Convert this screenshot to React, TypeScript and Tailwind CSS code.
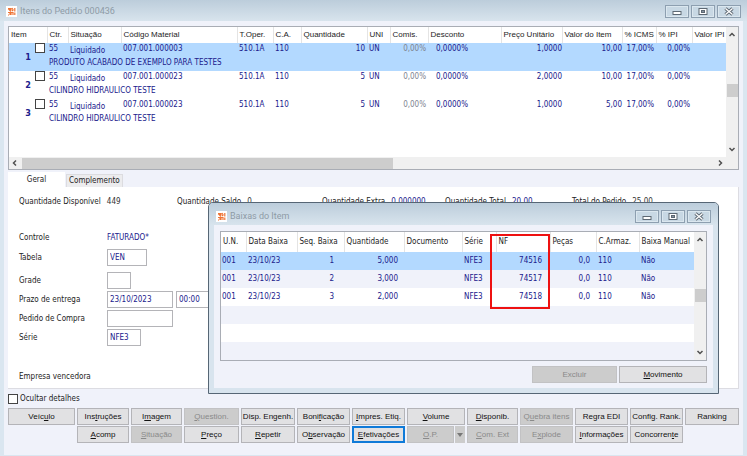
import React from "react";

const ui = "font-['DejaVu_Sans_Condensed','Liberation_Sans',sans-serif]";

function AppIcon() {
  return (
    <svg viewBox="0 0 11 11" className="size-[11px] shrink-0" aria-hidden="true">
      <rect width="11" height="11" fill="#fff" />
      <path d="M2 2.5h3v1.2H3.2L5 5.5M6 2l1 1.500M8.800 2v3.500M6 5l1.500-1.500M2 6.500h2v2.500M5 9V6.500h2V9M8.800 6.500V9M2 9h1" stroke="#ee7436" strokeWidth="1.200" fill="none" />
    </svg>
  );
}

function Caption({ title, frame }: { title: string; frame: string }) {
  const box =
    "flex h-[13px] w-6 items-center justify-center border border-[#8d9fb0] bg-[#c8d8e4] shadow-[inset_0_0_0_1px_#dbe7ef]";
  return (
    <header className={"flex items-start bg-linear-to-b from-[#bccddb] to-[#d8e4ed] " + frame}>
      <div className="flex items-center gap-[3px]">
        <AppIcon />
        <h1 className="font-['Roboto',sans-serif] text-[9px] leading-3 text-[#8e9ba6]">{title}</h1>
      </div>
      <div className="ml-auto flex gap-[2px]">
        <button className={box} aria-label="Minimizar">
          <svg viewBox="0 0 10 9" className="h-[9px] w-[10px]">
            <rect x="1" y="4.500" width="8" height="3" fill="#fff" stroke="#5d6873" />
          </svg>
        </button>
        <button className={box} aria-label="Maximizar">
          <svg viewBox="0 0 10 9" className="h-[9px] w-[10px]">
            <rect x="1" y="1.500" width="8" height="6" fill="#fff" stroke="#5d6873" />
            <rect x="3.500" y="3.500" width="3" height="2" fill="#8793a0" stroke="#5d6873" />
          </svg>
        </button>
        <button className={box} aria-label="Fechar">
          <svg viewBox="0 0 10 9" className="h-[9px] w-[10px]">
            <path d="M1.500 1.500l7 6M8.500 1.500l-7 6" stroke="#5d6873" strokeWidth="3.200" />
            <path d="M1.500 1.500l7 6M8.500 1.500l-7 6" stroke="#fff" strokeWidth="1.300" />
          </svg>
        </button>
      </div>
    </header>
  );
}

function Chevron({ d }: { d: string }) {
  return (
    <svg viewBox="0 0 8 8" className="size-2 shrink-0" aria-hidden="true">
      <path d={d} fill="none" stroke="#505050" strokeWidth="1.500" />
    </svg>
  );
}
const UP = "M1.500 5L4 2.500L6.500 5";
const DOWN = "M1.500 3L4 5.500L6.500 3";
const LEFT = "M5 1.500L2.500 4L5 6.500";
const RIGHT = "M3 1.500L5.500 4L3 6.500";

function VScroll({ thumb }: { thumb: string }) {
  return (
    <div className="flex w-3 shrink-0 flex-col items-center bg-[#f0f0f0] pt-1 pb-1">
      <Chevron d={UP} />
      <div className={"h-[13px] w-[11px] bg-[#cdcdcd] " + thumb} />
      <div className="mt-auto flex">
        <Chevron d={DOWN} />
      </div>
    </div>
  );
}

const items = [
  { n: 1, code: "007.001.000003", name: "PRODUTO ACABADO DE EXEMPLO PARA TESTES", qty: "10", price: "1,0000", total: "10,00" },
  { n: 2, code: "007.001.000023", name: "CILINDRO HIDRAULICO TESTE", qty: "5", price: "2,0000", total: "10,00" },
  { n: 3, code: "007.001.000023", name: "CILINDRO HIDRAULICO TESTE", qty: "5", price: "1,0000", total: "5,00" },
];

const itemCols = [
  ["Item", "w-[38px]"],
  ["Ctr.", "w-[21px]"],
  ["Situação", "w-[53px]"],
  ["Código Material", "w-[116px]"],
  ["T.Oper.", "w-[36px]"],
  ["C.A.", "w-[28px]"],
  ["Quantidade", "w-[66px]"],
  ["UNI", "w-[23px]"],
  ["Comis.", "w-[38px]"],
  ["Desconto", "w-[73px]"],
  ["Preço Unitário", "w-[61px]"],
  ["Valor do Item", "w-[60px]"],
  ["% ICMS", "w-[34px]"],
  ["% IPI", "w-[36px]"],
  ["Valor IPI", "w-[34px]"],
];

function ItemsTable() {
  return (
    <section className="border border-[#a9adb5] bg-white">
      <div className="flex">
        <div className="min-w-0 flex-1 pb-[30px]">
          <table className="w-full table-fixed border-collapse whitespace-nowrap text-[#20208c]">
            <thead>
              <tr className="h-4 text-[#1c1c1c]">
                {itemCols.map(([label, w]) => (
                  <th key={label} className={"border-r border-[#e4e4e4] p-0 pl-[2px] text-left font-['Liberation_Sans',sans-serif] text-[8px] font-normal last:border-r-0 " + w}>
                    {label}
                  </th>
                ))}
              </tr>
            </thead>
            {items.map((it) => (
              <tbody key={it.n} className="first-of-type:bg-[#b3d9ff]">
                <tr className="h-[14px] align-top">
                  <td rowSpan={2} className="p-0">
                    <label className="flex justify-end gap-1 pr-[2px]">
                      <span className="pt-2 text-[9px] leading-3 font-bold">{it.n}</span>
                      <input type="checkbox" className="size-[10px] appearance-none border border-[#444] bg-white" />
                    </label>
                  </td>
                  <td className="p-0 pl-[2px]">55</td>
                  <td className="p-0 pl-[2px] align-bottom">Liquidado</td>
                  <td className="p-0 pl-[2px]">{it.code}</td>
                  <td className="p-0 pl-[2px]">510.1A</td>
                  <td className="p-0 pl-[2px]">110</td>
                  <td className="p-0 pr-[2px] text-right">{it.qty}</td>
                  <td className="p-0 pl-[2px]">UN</td>
                  <td className="p-0 pr-[2px] text-right text-[#7d8390]">0,00%</td>
                  <td className="p-0 pl-2">0,0000%</td>
                  <td className="p-0 text-right">{it.price}</td>
                  <td className="p-0 text-right">{it.total}</td>
                  <td className="p-0 pr-[2px] text-right">17,00%</td>
                  <td className="p-0 pr-[2px] text-right">0,00%</td>
                  <td className="p-0" />
                </tr>
                <tr className="h-[14px] align-top">
                  <td colSpan={14} className="p-0 pl-[2px]">{it.name}</td>
                </tr>
              </tbody>
            ))}
          </table>
        </div>
        <VScroll thumb="mt-[45px]" />
      </div>
      <div className="flex h-3 items-center bg-[#f0f0f0] pr-[14px] pl-[2px]">
        <Chevron d={LEFT} />
        <div className="ml-[3px] h-[11px] w-[52%] bg-[#cdcdcd]" />
        <div className="ml-auto flex">
          <Chevron d={RIGHT} />
        </div>
      </div>
    </section>
  );
}

const field = "h-[17px] border border-[#b4b4b8] bg-white px-[2px] text-[#20208c]";

function Field({ label, children, id }: { label: string; id: string; children: React.ReactNode }) {
  return (
    <div className="flex h-[17px] items-center">
      <label htmlFor={id} className="w-[88px]">{label}</label>
      {children}
    </div>
  );
}

function Details() {
  return (
    <section className="border-r border-b border-[#dcdce2] bg-white pt-[9px] pr-4 pb-[5px] pl-[11px]">
      <dl className="grid h-3 grid-cols-[158fr_145fr_123fr_127fr_150fr] leading-3 whitespace-nowrap">
        {[
          ["Quantidade Disponível", "449", "text-[#333]"],
          ["Quantidade Saldo", "0", "text-[#333]"],
          ["Quantidade Extra", "0,000000", "text-[#20208c]"],
          ["Quantidade Total", "20,00", "text-[#20208c]"],
          ["Total do Pedido", "25,00", "text-[#333]"],
        ].map(([k, v, c]) => (
          <div key={k} className="flex gap-[6px]">
            <dt>{k}</dt>
            <dd className={c}>{v}</dd>
          </div>
        ))}
      </dl>
      <div className="mt-[21px] flex flex-col">
        <Field label="Controle" id="controle">
          <output id="controle" className="text-[#20208c]">FATURADO*</output>
        </Field>
        <div className="mt-[3px]">
          <Field label="Tabela" id="tabela">
            <input id="tabela" defaultValue="VEN" className={"w-10 " + field} />
          </Field>
        </div>
        <div className="mt-[6px] flex flex-col gap-[2px]">
          <Field label="Grade" id="grade">
            <input id="grade" className={"w-6 " + field} />
          </Field>
          <Field label="Prazo de entrega" id="prazo">
            <input id="prazo" defaultValue="23/10/2023" className={"w-[66px] " + field} />
            <input aria-label="Hora de entrega" defaultValue="00:00" className={"ml-[3px] w-10 " + field} />
          </Field>
          <Field label="Pedido de Compra" id="compra">
            <input id="compra" className={"w-[66px] " + field} />
          </Field>
          <Field label="Série" id="serie">
            <input id="serie" defaultValue="NFE3" className={"w-[34px] " + field} />
          </Field>
        </div>
        <p className="mt-[25px] leading-3">Empresa vencedora</p>
      </div>
    </section>
  );
}

type Action = { pre?: string; key?: string; post?: string; off?: boolean; focus?: boolean; menu?: boolean } | null;

const actions: Action[] = [
  { pre: "Veíc", key: "u", post: "lo" },
  { pre: "Ins", key: "t", post: "ruções" },
  { pre: "I", key: "m", post: "agem" },
  { key: "Q", post: "uestion.", off: true },
  { pre: "Disp. Engenh." },
  { pre: "Boni", key: "f", post: "icação" },
  { key: "I", post: "mpres. Etiq." },
  { key: "V", post: "olume" },
  { key: "D", post: "isponib." },
  { pre: "Q", key: "u", post: "ebra itens", off: true },
  { pre: "Re", key: "g", post: "ra EDI" },
  { pre: "Config. Rank." },
  { pre: "Ranking" },
  null,
  { key: "A", post: "comp" },
  { key: "S", post: "ituação", off: true },
  { key: "P", post: "reço" },
  { key: "R", post: "epetir" },
  { pre: "O", key: "b", post: "servação" },
  { key: "E", post: "fetivações", focus: true },
  { key: "O", post: ".P.", off: true, menu: true },
  { key: "C", post: "om. Ext", off: true },
  { pre: "E", key: "x", post: "plode", off: true },
  { key: "I", post: "nformações" },
  { pre: "Concorren", key: "t", post: "e" },
];

function ActionButton({ a, className = "" }: { a: NonNullable<Action>; className?: string }) {
  const tone = a.off
    ? "border border-[#c2c2c4] bg-[#cccccc] text-[#8a8a8a]"
    : a.focus
      ? "border-2 border-[#0f7ad8] bg-[#e1e1e3] text-[#111]"
      : "border border-[#b4b4b8] bg-[#e1e1e3] text-[#111]";
  return (
    <button
      disabled={a.off}
      className={"h-[17px] min-w-0 font-['Liberation_Sans',sans-serif] text-[8px] leading-3 whitespace-nowrap " + tone + " " + className}
    >
      {a.pre}
      <span className="underline underline-offset-1">{a.key}</span>
      {a.post}
    </button>
  );
}

function Actions() {
  return (
    <nav className="grid grid-cols-[67fr_52fr_51fr_55fr_54fr_53fr_53fr_58fr_51fr_53fr_53fr_53fr_54fr] gap-x-[2px] gap-y-px">
      {actions.map((a, i) =>
        a === null ? (
          <span key={i} />
        ) : a.menu ? (
          <div key={i} className="flex gap-px">
            <ActionButton a={a} className="flex-1" />
            <button disabled aria-label="Mais opções" className="flex h-[17px] w-[10px] items-center justify-center bg-[#cccccc]">
              <svg viewBox="0 0 6 4" className="h-1 w-[6px]">
                <path d="M0 0h6L3 4z" fill="#777" />
              </svg>
            </button>
          </div>
        ) : (
          <ActionButton key={i} a={a} />
        ),
      )}
    </nav>
  );
}

const writeCols = [
  ["U.N.", "w-[25px]"],
  ["Data Baixa", "w-[51px]"],
  ["Seq. Baixa", "w-[47px]"],
  ["Quantidade", "w-[60px]"],
  ["Documento", "w-[58px]"],
  ["Série", "w-[34px]"],
  ["NF", "w-[54px]"],
  ["Peças", "w-[46px]"],
  ["C.Armaz.", "w-[43px]"],
  ["Baixa Manual", "w-[55px]"],
];
const writeRows = [
  ["1", "5,000", "74516"],
  ["2", "3,000", "74517"],
  ["3", "2,000", "74518"],
];

function WriteOffs() {
  return (
    <div role="dialog" aria-label="Baixas do Item" className="absolute top-[30px] right-5 w-[511px] rounded-t-[5px] border border-[#566675] bg-[#d8e4ee] px-[5px] pb-[5px]">
      <div className="-mx-[5px]">
        <Caption title="Baixas do Item" frame="h-[22px] rounded-t px-[7px] pt-[7px]" />
      </div>
      <div className="bg-[#f0f2fa] px-[6px] pt-[6px] pb-[5px]">
        <div className="relative flex border border-[#a9adb5] bg-white">
          <table className="w-full table-fixed border-collapse whitespace-nowrap text-[#20208c]">
            <thead>
              <tr className="h-5 text-[#1c1c1c]">
                {writeCols.map(([label, w]) => (
                  <th key={label} className={"border-r border-[#e4e4e4] p-0 pl-[2px] text-left font-normal last:border-r-0 " + w}>
                    {label}
                  </th>
                ))}
              </tr>
            </thead>
            <tbody>
              {writeRows.map(([seq, qty, nf]) => (
                <tr key={seq} className="h-[18px] first:bg-[#b3d9ff] even:bg-[#f0f2fa]">
                  <td className="p-0 pl-px">001</td>
                  <td className="p-0 pl-[2px]">23/10/23</td>
                  <td className="p-0 pr-[10px] text-right">{seq}</td>
                  <td className="p-0 pr-[6px] text-right">{qty}</td>
                  <td className="p-0" />
                  <td className="p-0 pl-[2px]">NFE3</td>
                  <td className="p-0 pr-2 text-right">{nf}</td>
                  <td className="p-0 pr-[6px] text-right">0,0</td>
                  <td className="p-0 pl-[2px]">110</td>
                  <td className="p-0 pl-[2px]">Não</td>
                </tr>
              ))}
              {[4, 5, 6].map((n) => (
                <tr key={n} className="h-[18px] even:bg-[#f0f2fa]">
                  <td colSpan={10} className="p-0" />
                </tr>
              ))}
            </tbody>
          </table>
          <VScroll thumb="mt-[45px]" />
          <div className="pointer-events-none absolute top-[2px] left-[269px] h-[75px] w-[60px] border-2 border-[#ee1111]" />
        </div>
        <div className="mt-[5px] flex justify-end gap-[2px]">
          <ActionButton a={{ pre: "Excluir", off: true }} className="w-[85px]" />
          <ActionButton a={{ key: "M", post: "ovimento" }} className="w-[88px]" />
        </div>
      </div>
    </div>
  );
}

export default function App() {
  return (
    <main className={"min-h-screen bg-[#dae6f0] text-[8px] leading-3 text-[#1c1c1c] " + ui}>
      <Caption title="Itens do Pedido 000436" frame="h-[21px] px-[6px] pt-[5px]" />
      <div className="mx-1 bg-[#f0f2fa] px-1 pt-[5px] pb-3">
        <ItemsTable />
        <div className="relative mt-[2px]">
          <div role="tablist" className="flex h-[15px] items-end gap-px">
            <button role="tab" aria-selected="true" className="h-[15px] w-[57px] bg-white">Geral</button>
            <button role="tab" aria-selected="false" className="h-[13px] border border-b-0 border-[#dcdce0] bg-[#ececee] px-[2px]">Complemento</button>
          </div>
          <Details />
          <WriteOffs />
        </div>
        <label className="mt-1 mb-[3px] flex items-center gap-[2px] leading-3">
          <input type="checkbox" className="size-[10px] appearance-none border border-[#444] bg-white" />
          Ocultar detalhes
        </label>
        <Actions />
      </div>
    </main>
  );
}
